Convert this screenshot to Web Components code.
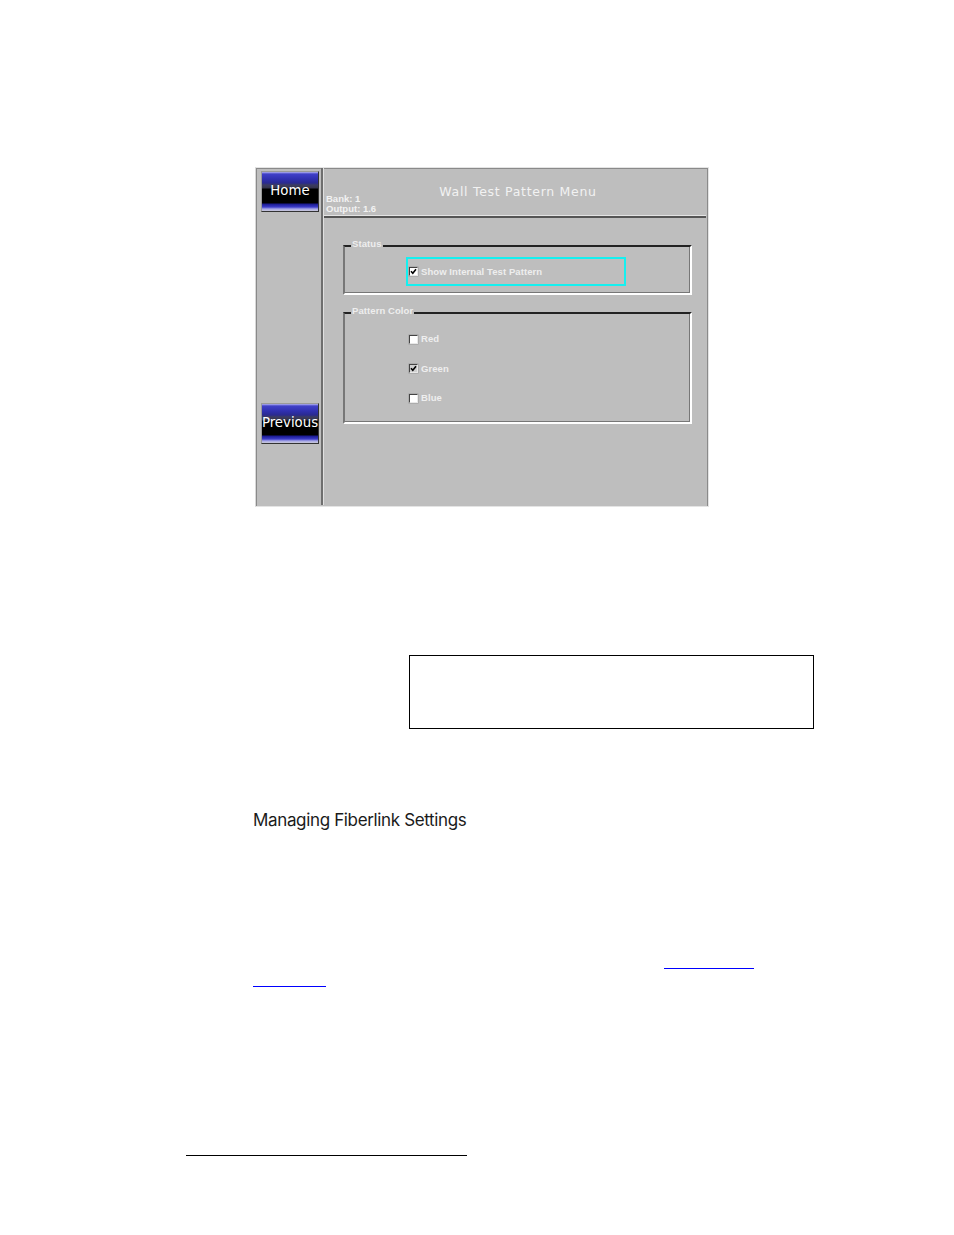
<!DOCTYPE html>
<html><head><meta charset="utf-8"><title>Wall Test Pattern Menu</title>
<style>html,body{margin:0;background:#fff}</style></head><body>
<doc-page></doc-page>
<script>
function def(name,html,init){customElements.define(name,class extends HTMLElement{constructor(){super();this.attachShadow({mode:'open'}).innerHTML=html;}connectedCallback(){init&&init(this)}})}

def('nav-button',`<style>
:host{display:flex;box-sizing:border-box;width:58px;height:41px;align-items:center;justify-content:center;
border:1px solid;border-color:#9a9a9a #333 #333 #9a9a9a;
background:linear-gradient(#b4b4f0 0,#4040c8 2px,#3030b0 7px,#2a2a90 11px,#3c3c60 13px,#34344c 16px,#000 17px,#000 31px,#1a1a90 32px,#3c3cc8 35px,#a8a8e8 37px,#c8c8d8 39px);
color:#fff;font:13.3px/1 "DejaVu Sans",sans-serif;white-space:nowrap}
span{position:relative;top:-1px}</style><span><slot></slot></span>`);

def('check-box',`<style>
:host{display:inline-block;box-sizing:border-box;width:9px;height:9px;background:#fff;flex:none;
border:1px solid;border-color:#444 #e8e8e8 #e8e8e8 #444;box-shadow:0 0 0 .5px #999}
svg{display:none;width:7px;height:7px}
:host([checked]) svg{display:block}
:host([dim]){background:#d0d0d0}
</style><svg viewBox="0 0 7 7"><path d="M1 3.2 2.8 5.2 6 1.2" fill="none" stroke="#000" stroke-width="1.6"/></svg>`);

def('check-row',`<style>
:host{display:flex;align-items:center;gap:3px;font:bold 9.5px/10px "Liberation Sans",sans-serif;letter-spacing:.08px;color:#eee;white-space:nowrap;height:10px}
</style><check-box id="b"></check-box><span><slot></slot></span>`,el=>{
 const b=el.shadowRoot.getElementById('b');
 if(el.hasAttribute('checked'))b.setAttribute('checked','');
 if(el.hasAttribute('dim'))b.setAttribute('dim','');});

def('group-box',`<style>
:host{display:block;box-sizing:border-box;position:relative;width:349px;margin-left:19px;
border:2px solid;border-color:#222 #fff #fff #777;box-shadow:inset -1px -1px 0 #777}
.l{position:absolute;left:6px;top:-9px;background:#bebebe;padding:0 1px;font:bold 9.5px/11px "Liberation Sans",sans-serif;letter-spacing:.08px;color:#eee;white-space:nowrap}
</style><div class="l"><slot name="legend"></slot></div><slot></slot>`);

def('focus-ring',`<style>
:host{display:flex;align-items:center;box-sizing:border-box;width:220px;height:29px;margin-left:61px;padding-left:1px;border:2px solid #14f0f0}
</style><slot></slot>`);

def('test-pattern-panel',`<style>
:host{display:flex;box-sizing:border-box;width:454px;height:340px;margin-left:255px;background:#bebebe;
border:1px solid;border-color:#e4e4e4 #e4e4e4 #e4e4e4 #d8d8d8;box-shadow:inset 1px 1px 0 #8a8a8a,inset -1px 0 0 #8a8a8a}
aside{box-sizing:border-box;width:67px;height:337px;padding:3px 0 0 5px;border-right:2px solid #6e6e6e;box-shadow:1px 0 0 #e0e0e0}
.prev{margin-top:191px}
main{flex:1;min-width:0;padding-left:1px}
header{box-sizing:border-box;height:50px;margin-right:2px;border-bottom:2px solid #555;box-shadow:inset 0 -1px 0 #e4e4e4;position:relative;color:#f2f2f2}
.title{text-align:center;font:12.5px/16px "DejaVu Sans",sans-serif;letter-spacing:.7px;padding:16px 0 0 6px}
.info{position:absolute;left:2px;top:26px;font:bold 9.5px/10px "Liberation Sans",sans-serif}
.body{padding-top:27px}
.g2{margin-top:17px}
.status{padding:10px 0 7px}
.colors{display:flex;flex-direction:column;padding:20px 0 19px 64px;gap:19.5px}
</style>
<aside><nav-button>Home</nav-button><nav-button class="prev">Previous</nav-button></aside>
<main>
<header><div class="title">Wall Test Pattern Menu</div><div class="info">Bank: 1<br>Output: 1.6</div></header>
<div class="body">
<group-box><span slot="legend">Status</span><div class="status"><focus-ring><check-row checked>Show Internal Test Pattern</check-row></focus-ring></div></group-box>
<group-box class="g2"><span slot="legend">Pattern Color</span><div class="colors"><check-row>Red</check-row><check-row checked dim>Green</check-row><check-row>Blue</check-row></div></group-box>
</div></main>`);

def('note-box',`<style>:host{display:block;box-sizing:border-box;width:405px;height:74px;margin-left:409px;border:1px solid #000}</style>`);
def('section-heading',`<style>:host{display:block;margin-left:253px;font:17px/22px Inter,sans-serif;letter-spacing:-.35px;color:#1a1a1a;white-space:nowrap}</style><slot></slot>`);
def('link-line',`<style>:host{display:block;height:1px;background:#0000ff}</style>`);

def('doc-page',`<style>
:host{display:block;box-sizing:border-box;width:954px;height:1235px;padding-top:167px;background:#fff;overflow:hidden}
note-box{margin-top:148px}
section-heading{margin-top:80px}
.l1{margin:137px 0 0 664px;width:90px}
.l2{margin:17px 0 0 253px;width:73px}
.fn{height:1px;background:#000;width:281px;margin:168px 0 0 186px}
</style>
<test-pattern-panel></test-pattern-panel>
<note-box></note-box>
<section-heading>Managing Fiberlink Settings</section-heading>
<link-line class="l1"></link-line><link-line class="l2"></link-line>
<div class="fn"></div>`);
</script></body></html>
